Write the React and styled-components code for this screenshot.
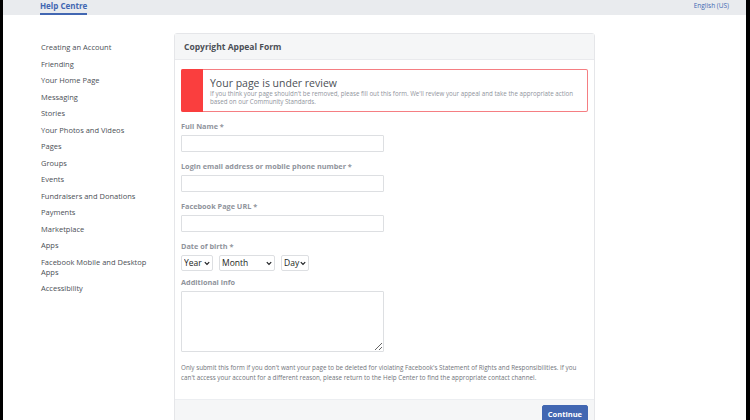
import React from "react";
import styled, { createGlobalStyle } from "styled-components";

const Global = createGlobalStyle`
  html, body { margin: 0; padding: 0; background: #fff; }
  body { font-family: "Open Sans", "Noto Sans", Arial, sans-serif; }
  * { box-sizing: border-box; }
`;

const Frame = styled.div`
  width: 750px;
  height: 420px;
  overflow: hidden;
  border-left: 3px solid #000;
  border-right: 4px solid #000;
  background: #fff;
`;

const TopBar = styled.header`
  height: 15px;
  background: #e9ebee;
  display: flex;
  justify-content: space-between;
  align-items: flex-start;
  padding: 0 17px 0 37px;
`;

const Brand = styled.a`
  font-size: 8px;
  font-weight: 700;
  color: #4267b2;
  line-height: 11px;
  height: 15px;
  border-bottom: 2px solid #4267b2;
  text-decoration: none;
`;

const Lang = styled.a`
  font-size: 6.5px;
  color: #4267b2;
  line-height: 11px;
  text-decoration: none;
`;

const Main = styled.div`
  display: flex;
  align-items: flex-start;
  padding: 18px 0 0 38px;
`;

const Nav = styled.ul`
  list-style: none;
  margin: 0;
  padding: 9px 0 0;
  width: 133px;
  display: flex;
  flex-direction: column;
  gap: 6.5px;
`;

const NavItem = styled.li`
  max-width: 112px;
  font-size: 7.5px;
  line-height: 10px;
  color: #4b4f56;
`;

const Card = styled.section`
  width: 421px;
  border: 1px solid #e5e6e9;
  border-radius: 3px;
  background: #fff;
`;

const CardHead = styled.div`
  height: 26px;
  background: #f5f6f7;
  border-bottom: 1px solid #e9eaed;
  display: flex;
  align-items: center;
  padding-left: 9px;
  font-size: 8.5px;
  font-weight: 700;
  color: #4b4f56;
`;

const CardBody = styled.div`
  padding: 9px 6px 16px;
`;

const Alert = styled.div`
  display: flex;
  height: 43px;
  border-radius: 2px;
  background: #fff;
  box-shadow: inset 0 0 0 1px #f57e82;
`;

const Strip = styled.div`
  width: 22px;
  background: #fa3e3e;
  border-radius: 2px 0 0 2px;
  flex: none;
`;

const AlertText = styled.div`
  padding: 8px 6px 5px 7px;
`;

const AlertTitle = styled.div`
  font-size: 10.5px;
  line-height: 13px;
  color: #4b4f56;
`;

const AlertDesc = styled.div`
  font-size: 6.2px;
  line-height: 8px;
  color: #90949c;
`;

const Field = styled.div`
  margin-top: ${(p) => p.$top}px;
  display: flex;
  flex-direction: column;
  align-items: flex-start;
`;

const Label = styled.label`
  font-size: 7.3px;
  font-weight: 700;
  line-height: 10px;
  color: #90949c;
  margin-bottom: 4px;
`;

const Input = styled.input`
  display: block;
  width: 203px;
  height: 17px;
  border: 1px solid #dddfe2;
  border-radius: 1px;
  background: #fff;
  outline: none;
`;

const TextArea = styled.textarea`
  width: 203px;
  height: 61px;
  border: 1px solid #dddfe2;
  border-radius: 1px;
  outline: none;
  display: block;
`;

const SelectRow = styled.div`
  display: flex;
  gap: 6px;
`;

const SelectWrap = styled.div`
  position: relative;
  width: ${(p) => p.$w}px;
  height: 16px;
`;

const Select = styled.select`
  display: block;
  appearance: none;
  width: 100%;
  height: 100%;
  margin: 0;
  border: 1px solid #dddfe2;
  border-radius: 2px;
  background: #fff;
  font-family: inherit;
  font-size: 8.5px;
  line-height: 14px;
  color: #1c1e21;
  padding: 0 0 0 2px;
  outline: none;
`;

const Chevron = styled.svg`
  position: absolute;
  right: 3px;
  top: 6px;
  width: 6px;
  height: 5px;
  pointer-events: none;
`;

const Note = styled.p`
  margin: 11px 0 0;
  font-size: 6.3px;
  line-height: 10px;
  color: #72757b;
`;

const CardFoot = styled.div`
  background: #f5f6f7;
  border-top: 1px solid #eceef1;
  display: flex;
  justify-content: flex-end;
  padding: 5px 6px 5px;
  height: 30px;
`;

const Button = styled.button`
  height: 17px;
  padding: 0 5px;
  background: #4267b2;
  border: 1px solid #4267b2;
  border-radius: 2px;
  color: #fff;
  font-family: inherit;
  font-size: 7.5px;
  font-weight: 700;
`;

const navItems = [
  "Creating an Account",
  "Friending",
  "Your Home Page",
  "Messaging",
  "Stories",
  "Your Photos and Videos",
  "Pages",
  "Groups",
  "Events",
  "Fundraisers and Donations",
  "Payments",
  "Marketplace",
  "Apps",
  "Facebook Mobile and Desktop Apps",
  "Accessibility",
];

const DropSelect = ({ w, label }) => (
  <SelectWrap $w={w}>
    <Select defaultValue="">
      <option value="">{label}</option>
    </Select>
    <Chevron viewBox="0 0 6 5">
      <path d="M0.8 1.2 L3 3.4 L5.2 1.2" fill="none" stroke="#1c1e21" strokeWidth="1.2" />
    </Chevron>
  </SelectWrap>
);

export default function App() {
  return (
    <Frame>
      <Global />
      <TopBar>
        <Brand>Help Centre</Brand>
        <Lang>English (US)</Lang>
      </TopBar>
      <Main>
        <Nav>
          {navItems.map((t) => (
            <NavItem key={t}>{t}</NavItem>
          ))}
        </Nav>
        <Card>
          <CardHead>Copyright Appeal Form</CardHead>
          <CardBody>
            <Alert>
              <Strip />
              <AlertText>
                <AlertTitle>Your page is under review</AlertTitle>
                <AlertDesc>
                  If you think your page shouldn't be removed, please fill out this form. We'll review your appeal and take the appropriate action based on our Community Standards.
                </AlertDesc>
              </AlertText>
            </Alert>
            <Field $top={9}>
              <Label>Full Name *</Label>
              <Input />
            </Field>
            <Field $top={9}>
              <Label>Login email address or mobile phone number *</Label>
              <Input />
            </Field>
            <Field $top={9}>
              <Label>Facebook Page URL *</Label>
              <Input />
            </Field>
            <Field $top={9}>
              <Label>Date of birth *</Label>
              <SelectRow>
                <DropSelect w={32} label="Year" />
                <DropSelect w={56} label="Month" />
                <DropSelect w={28} label="Day" />
              </SelectRow>
            </Field>
            <Field $top={6}>
              <Label>Additional info</Label>
              <TextArea />
            </Field>
            <Note>
              Only submit this form if you don't want your page to be deleted for violating Facebook's Statement of Rights and Responsibilities. If you can't access your account for a different reason, please return to the Help Center to find the appropriate contact channel.
            </Note>
          </CardBody>
          <CardFoot>
            <Button>Continue</Button>
          </CardFoot>
        </Card>
      </Main>
    </Frame>
  );
}
